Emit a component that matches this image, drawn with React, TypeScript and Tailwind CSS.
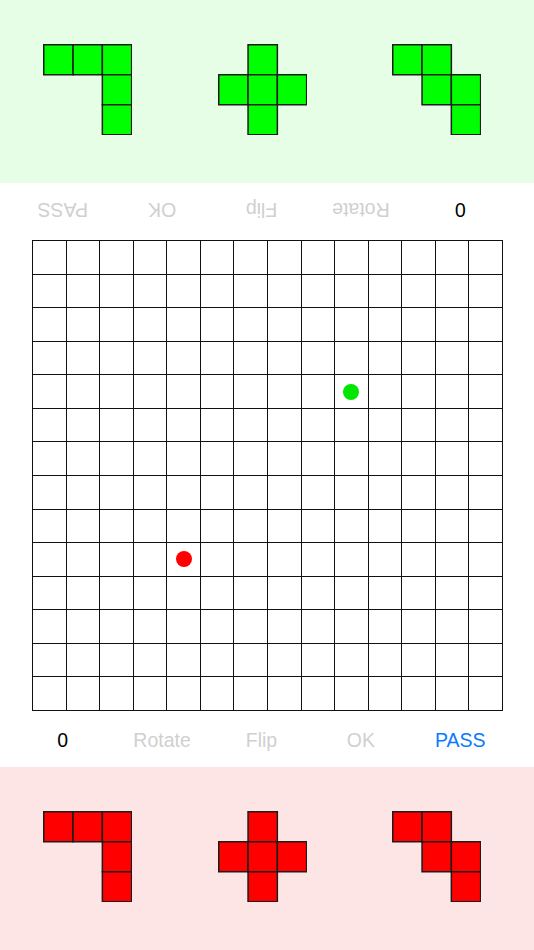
import React from 'react';

type Cell = [number, number];

const SHAPES: Cell[][] = [
  [[0, 0], [1, 0], [2, 0], [2, 1], [2, 2]],
  [[1, 0], [0, 1], [1, 1], [2, 1], [1, 2]],
  [[0, 0], [1, 0], [1, 1], [2, 1], [2, 2]],
];

const SIZE = 14;
const UNIT = 29.3;

function Piece({ cells, fill }: { cells: Cell[]; fill: string }) {
  return (
    <svg width={89} height={91} viewBox="0 0 89 91" className="block shrink-0">
      {cells.map(([x, y]) => (
        <rect
          key={`${x}-${y}`}
          x={0.75 + x * UNIT}
          y={0.75 + y * 30}
          width={UNIT}
          height={30}
          fill={fill}
          stroke="#1c1c1c"
          strokeWidth={1.5}
        />
      ))}
    </svg>
  );
}

function Tray({ fill, bg }: { fill: string; bg: string }) {
  return (
    <div className={`h-[183px] ${bg} pt-[44px]`}>
      <div className="flex gap-[85.5px] pl-[43px]">
        {SHAPES.map((s, i) => (
          <Piece key={i} cells={s} fill={fill} />
        ))}
      </div>
    </div>
  );
}

function Toolbar({ active, flipped }: { active: boolean; flipped?: boolean }) {
  const items = ['Rotate', 'Flip', 'OK', 'PASS'];
  return (
    <div className="h-[57px]">
      <div
        className={`ml-[13px] grid h-full w-[497px] grid-cols-5 items-start pt-[19px] text-[19.5px] leading-[23px] ${
          flipped ? 'rotate-180' : ''
        }`}
      >
        <span className="text-center text-black">0</span>
        {items.map((t) => (
          <span
            key={t}
            className={`text-center ${active && t === 'PASS' ? 'text-[#0a7aff]' : 'text-[#d0d0d0]'}`}
          >
            {t}
          </span>
        ))}
      </div>
    </div>
  );
}

function Board() {
  const dots: Record<string, string> = { '4-9': 'bg-[#00e600]', '9-4': 'bg-[#ff0000]' };
  const cells = [];
  for (let r = 0; r < SIZE; r++) {
    for (let c = 0; c < SIZE; c++) {
      const dot = dots[`${r}-${c}`];
      cells.push(
        <div key={`${r}-${c}`} className="flex items-center justify-center border-r border-b border-[#111]">
          {dot && <div className={`h-[16px] w-[16px] rounded-full ${dot}`} />}
        </div>,
      );
    }
  }
  return (
    <div className="h-[470px] pl-[32px]">
      <div className="grid h-[471px] w-[471px] grid-cols-14 grid-rows-14 border-t border-l border-[#111]">
        {cells}
      </div>
    </div>
  );
}

export default function App() {
  return (
    <div className="h-[950px] w-[534px] overflow-hidden bg-white font-['Liberation_Sans',Arial,sans-serif]">
      <Tray fill="#00ff00" bg="bg-[#e6fde6]" />
      <Toolbar active={false} flipped />
      <Board />
      <Toolbar active />
      <Tray fill="#ff0000" bg="bg-[#fde5e5]" />
    </div>
  );
}
